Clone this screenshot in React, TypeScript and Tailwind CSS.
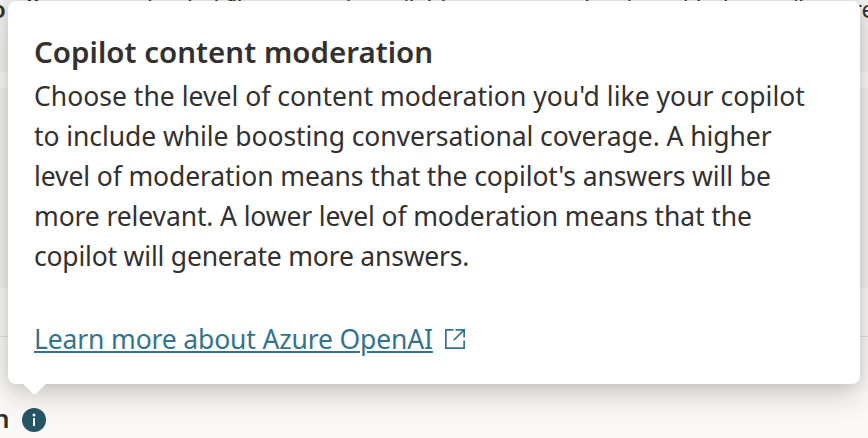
import clsx from "clsx";

const LINES = [
  { text: "Choose the level of content moderation you'd like your copilot", tracking: "tracking-[0.02px]" },
  { text: "to include while boosting conversational coverage. A higher", tracking: "tracking-[-0.07px]" },
  { text: "level of moderation means that the copilot's answers will be", tracking: "tracking-[-0.11px]" },
  { text: "more relevant. A lower level of moderation means that the", tracking: "tracking-[-0.125px]" },
  { text: "copilot will generate more answers.", tracking: "tracking-[-0.2px]" },
];

function OpenIcon() {
  return (
    <svg className="ml-3 mt-[10px] h-5 w-5 shrink-0" viewBox="0 0 20 20" fill="none" stroke="#33748c" strokeWidth="1.7">
      <path d="M8.5.85H.85v18.3h18.3V11.5" />
      <path d="M10.5.85h8.65V8.5M19.15.85 8.75 11.25" />
    </svg>
  );
}

function Callout() {
  return (
    <div className="absolute left-2 top-px h-[383px] w-[852px] rounded-lg bg-white pl-[26px] pt-[31px] shadow-[0_12.8px_28.8px_rgba(0,0,0,0.16),0_0_16px_rgba(0,0,0,0.12)]">
      <div className="absolute left-[15.5px] top-[369px] h-[21px] w-[21px] rotate-45 rounded-[3px] bg-white" />
      <h1 className="h-11 whitespace-nowrap text-[29.5px] font-semibold leading-10 tracking-[0.02px]">
        Copilot content moderation
      </h1>
      {LINES.map((line) => (
        <p
          key={line.text}
          className={clsx("h-10 whitespace-nowrap text-[26.5px] leading-10", line.tracking)}
        >
          {line.text}
        </p>
      ))}
      <div className="mt-[43px] flex h-10">
        <a
          href="#"
          className="whitespace-nowrap text-[26.5px] leading-10 tracking-[-0.15px] text-[#33748c] underline decoration-2 underline-offset-[2px]"
        >
          Learn more about Azure OpenAI
        </a>
        <OpenIcon />
      </div>
    </div>
  );
}

export default function App() {
  return (
    <div className="relative flex h-[438px] w-[868px] flex-col overflow-hidden bg-[#faf9f8] font-['Noto_Sans',sans-serif] text-[#323130]">
      <div className="h-[72px] bg-[#f3f2f1]">
        <div className="-ml-[9px] -mt-[3px] flex whitespace-nowrap text-[24px] leading-6">
          <span className="w-[128px] shrink-0 font-semibold">o all users:</span>
          <span className="w-[733px] shrink-0 tracking-[-0.9px]">
            uploaded file content is available to anyone chatting with the copilot
          </span>
          <span>regardless</span>
        </div>
      </div>
      <div className="mt-4 h-[200px] bg-[#f3f2f1]" />
      <div className="h-[49px] border-b border-[#e1dfdd]" />
      <div className="flex flex-1 items-center pt-[65px]">
        <span className="-ml-[7px] -mt-1 w-4 text-[26px] font-semibold leading-7">n</span>
        <svg className="ml-[13px] h-6 w-6" viewBox="0 0 24 24">
          <circle cx="12" cy="12" r="12" fill="#265566" />
          <circle cx="12" cy="7" r="1.5" fill="#fff" />
          <path d="M12 10v8" stroke="#fff" strokeWidth="2" />
        </svg>
      </div>
      <Callout />
    </div>
  );
}
